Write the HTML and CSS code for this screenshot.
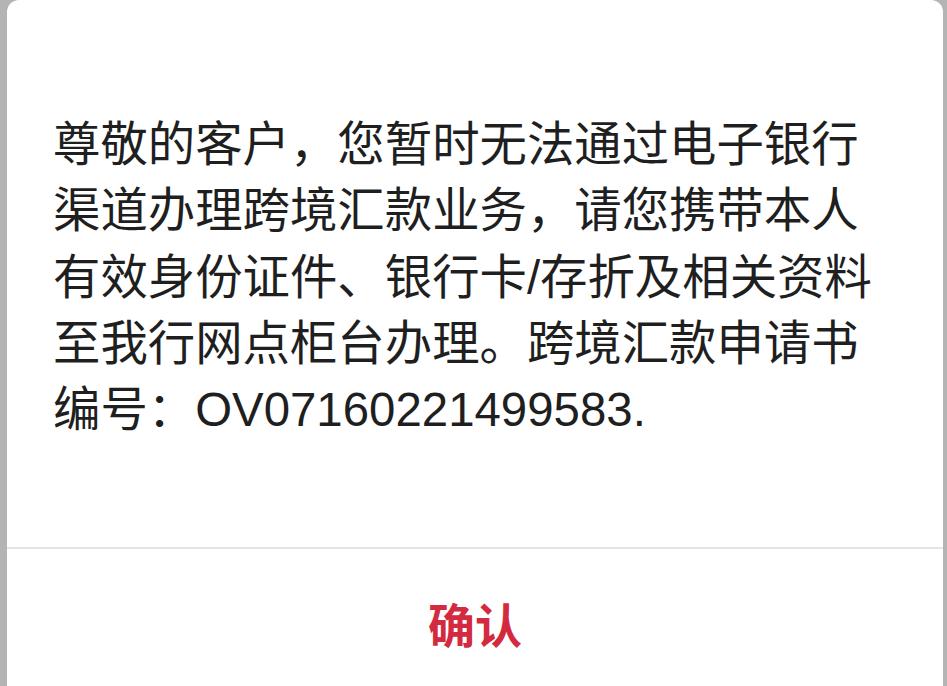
FILE: index.html
```html
<!DOCTYPE html>
<html lang="zh-CN">
<head>
<meta charset="utf-8">
<title>提示</title>
<link rel="stylesheet" href="styles.css">
</head>
<body>
<div class="backdrop">
  <div class="dialog">
    <div class="dialog-body">
      <p class="message">尊敬的客户，您暂时无法通过电子银行渠道办理跨境汇款业务，请您携带本人有效身份证件、银行卡/存折及相关资料至我行网点柜台办理。跨境汇款申请书编号：OV07160221499583.</p>
    </div>
    <div class="dialog-footer">
      <span class="confirm">确认</span>
    </div>
  </div>
</div>
</body>
</html>
```
FILE: styles.css
```css
html, body {
  margin: 0;
  padding: 0;
  height: 100%;
  overflow: hidden;
}
body {
  background: #b4b4b4;
  font-family: "Noto Sans CJK SC", "Noto Sans", sans-serif;
}
.backdrop {
  padding-left: 7px;
  height: 100%;
}
.dialog {
  width: 936px;
  height: 720px;
  background: #ffffff;
  border-radius: 12px 12px 0 0;
  display: flex;
  flex-direction: column;
}
.dialog-body {
  height: 549px;
  box-sizing: border-box;
  padding: 112px 0 0 46px;
  border-bottom: 2px solid #e4e4e4;
}
.message {
  margin: 0;
  width: 830px;
  font-family: "Liberation Sans", "Noto Sans CJK SC", sans-serif;
  font-size: 47.4px;
  line-height: 66.25px;
  color: #1f1f1f;
}
.dialog-footer {
  height: 146px;
  display: flex;
  align-items: center;
  justify-content: center;
}
.confirm {
  font-size: 47px;
  font-weight: 700;
  color: #d42a40;
}
```
